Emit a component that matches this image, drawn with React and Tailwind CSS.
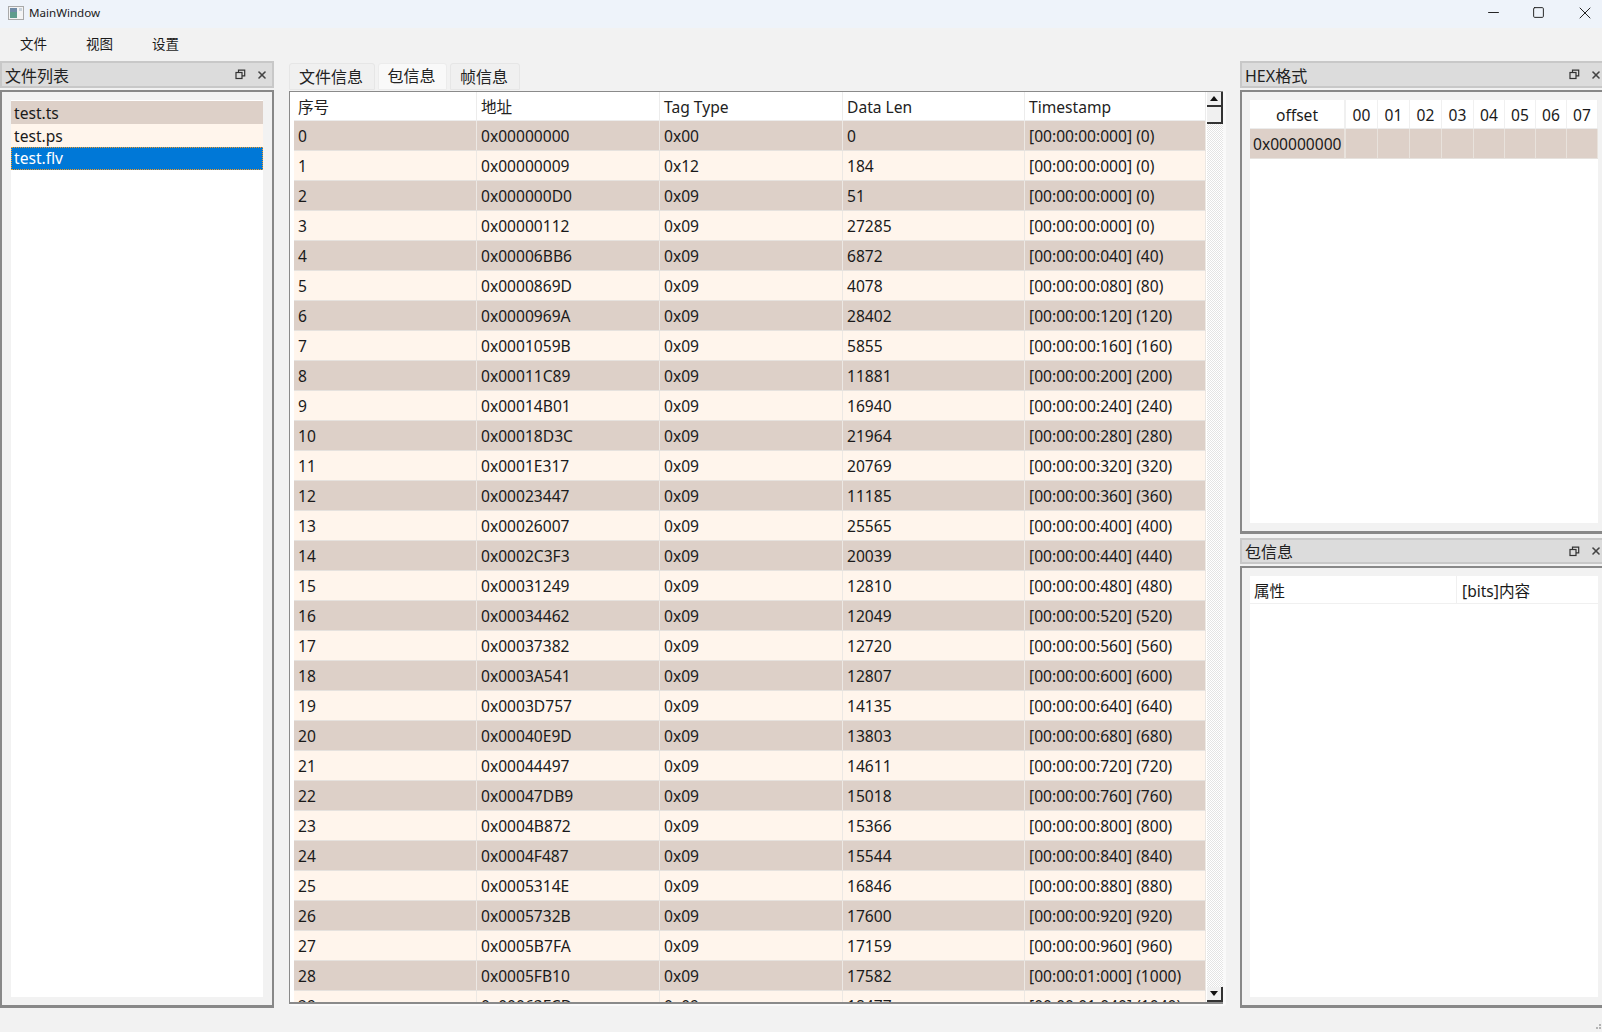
import { Minus, Square, X } from 'lucide-react';

const font = { fontFamily: '"Noto Sans", "Noto Sans CJK SC", sans-serif' };

const rows = [
  ['0', '0x00000000', '0x00', '0', '[00:00:00:000] (0)'],
  ['1', '0x00000009', '0x12', '184', '[00:00:00:000] (0)'],
  ['2', '0x000000D0', '0x09', '51', '[00:00:00:000] (0)'],
  ['3', '0x00000112', '0x09', '27285', '[00:00:00:000] (0)'],
  ['4', '0x00006BB6', '0x09', '6872', '[00:00:00:040] (40)'],
  ['5', '0x0000869D', '0x09', '4078', '[00:00:00:080] (80)'],
  ['6', '0x0000969A', '0x09', '28402', '[00:00:00:120] (120)'],
  ['7', '0x0001059B', '0x09', '5855', '[00:00:00:160] (160)'],
  ['8', '0x00011C89', '0x09', '11881', '[00:00:00:200] (200)'],
  ['9', '0x00014B01', '0x09', '16940', '[00:00:00:240] (240)'],
  ['10', '0x00018D3C', '0x09', '21964', '[00:00:00:280] (280)'],
  ['11', '0x0001E317', '0x09', '20769', '[00:00:00:320] (320)'],
  ['12', '0x00023447', '0x09', '11185', '[00:00:00:360] (360)'],
  ['13', '0x00026007', '0x09', '25565', '[00:00:00:400] (400)'],
  ['14', '0x0002C3F3', '0x09', '20039', '[00:00:00:440] (440)'],
  ['15', '0x00031249', '0x09', '12810', '[00:00:00:480] (480)'],
  ['16', '0x00034462', '0x09', '12049', '[00:00:00:520] (520)'],
  ['17', '0x00037382', '0x09', '12720', '[00:00:00:560] (560)'],
  ['18', '0x0003A541', '0x09', '12807', '[00:00:00:600] (600)'],
  ['19', '0x0003D757', '0x09', '14135', '[00:00:00:640] (640)'],
  ['20', '0x00040E9D', '0x09', '13803', '[00:00:00:680] (680)'],
  ['21', '0x00044497', '0x09', '14611', '[00:00:00:720] (720)'],
  ['22', '0x00047DB9', '0x09', '15018', '[00:00:00:760] (760)'],
  ['23', '0x0004B872', '0x09', '15366', '[00:00:00:800] (800)'],
  ['24', '0x0004F487', '0x09', '15544', '[00:00:00:840] (840)'],
  ['25', '0x0005314E', '0x09', '16846', '[00:00:00:880] (880)'],
  ['26', '0x0005732B', '0x09', '17600', '[00:00:00:920] (920)'],
  ['27', '0x0005B7FA', '0x09', '17159', '[00:00:00:960] (960)'],
  ['28', '0x0005FB10', '0x09', '17582', '[00:00:01:000] (1000)'],
  ['29', '0x00063FCD', '0x09', '18477', '[00:00:01:040] (1040)'],
];

const headers = ['序号', '地址', 'Tag Type', 'Data Len', 'Timestamp'];
const hexCols = [
  ['00', 'w-[32px]'],
  ['01', 'w-[32px]'],
  ['02', 'w-[32px]'],
  ['03', 'w-[32px]'],
  ['04', 'w-[31px]'],
  ['05', 'w-[31px]'],
  ['06', 'w-[31px]'],
  ['07', 'w-[31px]'],
];

function AppIcon() {
  return (
    <svg width="16" height="14" viewBox="0 0 16 14" className="shrink-0">
      <rect x="0.5" y="0.5" width="15" height="13" fill="#f4f4f4" stroke="#a9a9a9" />
      <rect x="2" y="2" width="7" height="10" fill="#5f9c8c" />
      <rect x="2" y="2" width="7" height="4" fill="#6f8ba6" />
      <rect x="11" y="2" width="3" height="3" fill="#c9d3dc" />
    </svg>
  );
}

function DockTitle({ children, className }) {
  return (
    <div className={`flex items-center pl-[3px] bg-[#dcdcdc] border-2 border-[#c8c8c8] text-[16px] text-[#222] shrink-0 overflow-hidden ${className}`}>
      <span className="flex-1 mt-[2px] whitespace-nowrap">{children}</span>
      <svg width="11" height="11" viewBox="0 0 11 11" className="shrink-0 mr-[10px]" fill="none" stroke="#333" strokeWidth="1.2">
        <rect x="1" y="3.5" width="6" height="6" />
        <path d="M3.5 3.5V1.2h6.2v5.6H7" />
      </svg>
      <X size={12} strokeWidth={3.2} className="text-[#444] shrink-0" />
    </div>
  );
}

function Frame({ className, children }) {
  return (
    <div className={`border-2 border-[#888] border-b-[3px] pt-[8px] pb-[8px] pl-[8px] ${className}`}>
      {children}
    </div>
  );
}

function ScrollButton({ up }) {
  return (
    <div className="h-[15px] bg-[#f0f0f0] border-r-2 border-b-2 border-[#333] flex items-center justify-center shrink-0">
      <svg width="8" height="5" viewBox="0 0 8 5">
        <path d={up ? 'M4 0l4 5H0z' : 'M0 0h8L4 5z'} fill="#111" />
      </svg>
    </div>
  );
}

function FileList() {
  return (
    <div className="w-[274px] shrink-0 flex flex-col">
      <DockTitle className="h-[27px] pr-[4px]">文件列表</DockTitle>
      <Frame className="mt-[2px] flex-1 flex flex-col pr-[8px]">
        <div className="flex-1 mx-[1px] bg-white text-[15.6px] text-[#1a1a1a] pt-[1px]">
          <div className="h-[23px] pt-[1px] leading-[22px] pl-[3px] bg-[#ddd0c8]">test.ts</div>
          <div className="h-[23px] pt-[1px] leading-[22px] pl-[3px] bg-[#fff5ec]">test.ps</div>
          <div className="h-[23px] pt-[1px] leading-[19px] pl-[2px] bg-[#0078d7] text-white border border-dotted border-[#f59a23]">test.flv</div>
        </div>
      </Frame>
    </div>
  );
}

function PacketTable() {
  return (
    <div className="ml-[15px] w-[937px] shrink-0 flex flex-col">
      <div className="flex h-[30px] pt-[2px] gap-[3px] text-[16px] text-[#222] shrink-0">
        <div className="w-[86px] h-[27px] pr-[2px] leading-[26px] text-center bg-[#f0f0f0] border border-[#e6e6e6] rounded-t-[3px]">文件信息</div>
        <div className="w-[69px] h-[27px] pr-[2px] leading-[24px] text-center bg-[#f9f9f9] border border-[#ececec] rounded-t-[3px]">包信息</div>
        <div className="w-[70px] h-[27px] pr-[2px] leading-[26px] text-center bg-[#f0f0f0] border border-[#e6e6e6] rounded-t-[3px]">帧信息</div>
      </div>
      <div className="flex-1 min-h-0 flex flex-col bg-[#f9f9f9] rounded-[3px] pr-[3px] pb-[2px] mb-[2px]">
        <div className="flex-1 min-h-0 flex border border-[#8a8a8a] border-r-0 border-b-[2px] bg-white overflow-hidden">
          <div className="w-[916px] shrink-0 overflow-hidden pl-[4px] text-[15.6px] text-[#1a1a1a]">
            <div className="grid grid-cols-[183px_183px_183px_182px_181px] h-[29px] leading-[30px] border-b border-[#ececec]">
              {headers.map((h) => (
                <div key={h} className="pl-[4px] border-r border-[#ececec] text-[#222]">{h}</div>
              ))}
            </div>
            {rows.map((row, i) => (
              <div
                key={row[0]}
                className={`grid grid-cols-[183px_183px_183px_182px_181px] h-[30px] border-b border-[#e6e2de] ${i % 2 === 0 ? 'bg-[#ddd0c8]' : 'bg-[#fff5ec]'}`}
              >
                {row.map((cell, j) => (
                  <div key={j} className="h-[29px] pt-[1px] leading-[28px] pl-[4px] border-r border-[#ece8e4] whitespace-nowrap">{cell}</div>
                ))}
              </div>
            ))}
          </div>
          <div className="w-[16px] shrink-0 flex flex-col ml-[1px] bg-[repeating-conic-gradient(#e4e4e4_0_25%,#fff_0_50%)] bg-[length:2px_2px]">
            <ScrollButton up />
            <div className="h-[17px] bg-[#f0f0f0] border-r-2 border-b-2 border-[#333] shrink-0" />
            <div className="flex-1" />
            <ScrollButton />
          </div>
        </div>
      </div>
    </div>
  );
}

function HexPanel() {
  return (
    <div className="h-[473px] flex flex-col shrink-0">
      <DockTitle className="h-[27px] border-r-0">HEX格式</DockTitle>
      <Frame className="mt-[2px] flex-1 flex flex-col border-r-0">
        <div className="flex-1 bg-white text-[15.6px] text-[#1a1a1a] mr-[4px]">
          <div className="flex h-[29px] leading-[31px] border-b border-[#ececec] text-center">
            <div className="w-[96px] border-r-2 border-[#f0f0f0]">offset</div>
            {hexCols.map(([c, w]) => (
              <div key={c} className={`${w} border-r border-[#f0f0f0]`}>{c}</div>
            ))}
          </div>
          <div className="flex h-[30px] leading-[31px] bg-[#ddd0c8] border-b border-[#e6e2de]">
            <div className="w-[96px] pl-[3px] border-r-2 border-[#e8e2dc]">0x00000000</div>
            {hexCols.map(([c, w]) => (
              <div key={c} className={`${w} border-r border-[#e8e2dc]`} />
            ))}
          </div>
        </div>
      </Frame>
    </div>
  );
}

function PacketInfo() {
  return (
    <div className="mt-[4px] flex-1 flex flex-col min-h-0">
      <DockTitle className="h-[26px] border-r-0">包信息</DockTitle>
      <Frame className="mt-[2px] flex-1 flex flex-col border-r-0">
        <div className="flex-1 bg-white text-[15.6px] text-[#1a1a1a] mr-[4px]">
          <div className="flex h-[28px] leading-[31px] border-b border-[#f0f0f0]">
            <div className="w-[207px] pl-[4px] border-r border-[#f0f0f0]">属性</div>
            <div className="pl-[5px]">[bits]内容</div>
          </div>
        </div>
      </Frame>
    </div>
  );
}

export default function App() {
  return (
    <div className="w-[1602px] h-[1032px] flex flex-col bg-[#f2f2f2] overflow-hidden" style={font}>
      {/* Title bar */}
      <div className="h-[28px] shrink-0 flex items-center bg-[#eef3fa] pl-[8px] pb-[3px]">
        <AppIcon />
        <span className="ml-[5px] text-[11.6px] text-[#1a1a1a]">MainWindow</span>
        <div className="ml-auto flex items-center text-[#222]">
          <Minus size={17} strokeWidth={1.4} className="mr-[30px]" />
          <Square size={13} strokeWidth={1.8} className="mr-[30px]" />
          <X size={20} strokeWidth={1.2} className="mr-[7px]" />
        </div>
      </div>

      {/* Menu */}
      <div className="h-[33px] shrink-0 flex items-center text-[13.5px] text-[#1a1a1a] pl-[20px] gap-[39px]">
        <span>文件</span>
        <span>视图</span>
        <span>设置</span>
      </div>

      {/* Docks */}
      <div className="h-[947px] shrink-0 flex">
        <FileList />
        <PacketTable />
        <div className="ml-[14px] flex-1 min-w-0 flex flex-col">
          <HexPanel />
          <PacketInfo />
        </div>
      </div>

      {/* Status bar grip */}
      <div className="flex-1 flex justify-end items-end">
        <svg width="8" height="8" viewBox="0 0 8 8" fill="#b4b4b4">
          <rect x="5" y="0" width="2" height="2" />
          <rect x="2" y="3" width="2" height="2" />
          <rect x="5" y="3" width="2" height="2" />
        </svg>
      </div>
    </div>
  );
}
